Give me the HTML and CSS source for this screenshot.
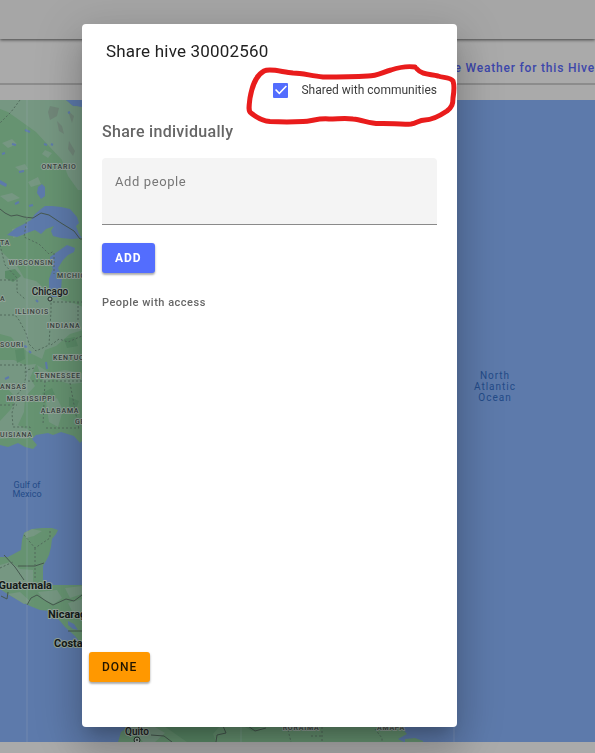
FILE: index.html
```html
<!DOCTYPE html>
<html lang="en">
<head>
<meta charset="utf-8">
<meta name="viewport" content="width=device-width, initial-scale=1">
<title>Share hive 30002560</title>
<link rel="stylesheet" href="styles.css">
</head>
<body>
<div class="page">
  <header class="topbar"></header>
  <nav class="toolbar"><a class="weather-link" href="#">See Weather for this Hive</a></nav>
  <main class="map">
    <svg class="map-canvas" viewBox="0 100 595 642" preserveAspectRatio="xMinYMin slice" role="img" aria-label="Map">
      <rect class="water" y="100" width="595" height="642"/>
      <path class="land" d="M0 100H66L73 106L82 107H120V441L82 441L80 443L74 436L61 432L53 435L48 433L36 435L32 439L37 445L33 449L25 447L18 443L8 447L0 445Z"/>
      <path class="plain" d="M20 100H66L73 106L90 107V190L78 190L68 176L62 160L48 145L36 132L22 122L8 112L0 109V100Z"/>
      <path class="plain" d="M0 250L8 258L16 264L24 278L36 281L46 290L62 300L76 304L90 310V328L70 334L56 346L45 350L42 359L28 352L18 345L11 337L0 334ZM0 360L14 360L25 365L36 364L30 378L35 386L25 397L24 412L18 425L31 431L26 439L12 438L0 439V421L11 409L16 398L8 389L0 384Z"/>
      <path class="plain" d="M37 365L50 373L65 370L90 375V382L70 384L53 379L44 383ZM46 402L57 398L63 410L58 427L49 422ZM2 143L12 139L17 144L8 148ZM15 167L25 164L28 169L20 171ZM28 182L38 177L41 184L31 187ZM0 196L12 193L20 198L8 202ZM12 229L22 227L26 234L13 238ZM45 150L52 153L48 158L42 154Z"/>
      <path class="forest" d="M5 271L15 269L21 276L13 282L5 278ZM15 350L24 348L25 359L17 363ZM42 393L52 388L55 395L46 400ZM69 397L79 401L76 409L69 406ZM64 339L75 337L78 346L67 348Z"/>
      <path class="scrub" d="M50 106L59 108L57 116L50 120L48 112ZM57 121L62 126L64 134L59 131ZM68 111L74 116L72 123ZM69 141L75 151L73 156L68 149Z"/>
      <path class="water" d="M66 100L72 105L82 107V100ZM7 235L16 228L22 225L31 220L35 214L41 209L45 206L52 206L61 207L70 209L77 217L79 223L76 226L79 234L82 238L72 239L61 238L53 236L51 231L54 226L46 229L41 234L35 230L27 233L17 237ZM50 263L50 257L57 252L67 245L75 248L74 252L68 255L63 260L58 268L62 277L61 290L59 297L52 297L49 291L49 279L53 268ZM38 187L42 184L45 187V196L41 199L37 193ZM0 180L7 184L6 187L0 184Z"/>
      <path class="speck" d="M25 130l5 2M12 144l4 1M44 144l3 1M2 154l3-1M51 144l2 1M19 172l5-1M15 204l4-2M68 113l2-1M29 206l4-1M29 351l2 2M24 346l3 1M46 362l1 7M5 379l4-2M36 300l2 2"/>
      <path class="border-line" d="M0 209L5 213L11 216L17 215L24 217L33 218L41 213L49 215L61 223L74 231L80 239H84"/>
      <path class="state-line" d="M20 100L11 112L0 123M27 218L24 237L39 244L49 254L54 251M0 245L5 265L17 278L17 292L25 299M0 280H16M0 315H15L19 320L26 333L29 344L36 351L49 345L51 311V300M53 302H82M51 345L59 339L68 342L82 336M34 368L27 370L24 386L16 396L12 413L13 427H30V431M0 405H17M0 365H26L25 374M28 381H82M45 381L43 425M46 428H79M70 383L75 410L79 429M78 302V320M54 253V274"/>
      <path class="land" d="M24 533L32 529L42 528L52 528L58 530L56 534L52 539L51 547L49 555L46 561L43 566V579L43 585L55 585L82 585H120V665H96L79 641L75 636L65 627L60 621L50 611L40 610L30 606L18 600L9 595L0 589V557L8 557L21 550L22 540Z"/>
      <path class="plain" d="M24 533L32 529L42 531L34 536L26 538ZM0 565L10 562L20 569L33 570V587L20 583L9 589L0 585ZM8 594L20 592L31 602L24 604ZM38 592L57 590L62 598L54 604L44 600ZM65 588L82 586V594L70 598ZM68 603L82 599V620L73 613Z"/>
      <path class="water" d="M68 621L74 624L78 630L73 629L68 625Z"/>
      <path class="border-line" d="M18 566H35M35 566L44 563M4 555L15 567L24 580M8 592L7 599L1 596M27 605L31 598L37 595L46 601L53 605L66 599L74 601L82 595M68 631H82"/>
      <path class="state-line" d="M24 535L35 548L50 538L50 531M35 548V580M0 568L13 562"/>
      <path class="land" d="M118 742L121 732L129 726H400L407 734L398 739L404 742Z"/>
      <path class="forest" d="M164 726H220L213 734L216 742H187L174 733ZM243 726L252 731L264 726Z"/>
      <path class="plain" d="M129 727H155L165 733L155 742H143L137 735Z"/>
      <path class="land" d="M405 739L415 738L423 741V742H405Z"/>
      <path class="border-line" d="M151 735L164 736L172 742M223 726L226 733L217 735L216 742M248 726L255 731L266 728"/>
      <path class="state-line" d="M288 730L291 742M322 727V742M375 729L382 738V742M311 736H322"/>
      <path class="tile-line" d="M27 100V742M241 726V742M454 726V742"/>
      <g class="label-state">
        <text x="59" y="169">ONTARIO</text>
        <text x="0" y="245" class="from-left">TA</text>
        <text x="31" y="265">WISCONSIN</text>
        <text x="57" y="278" class="from-left">MICHIGAN</text>
        <text x="0" y="301" class="from-left">A</text>
        <text x="32" y="314">ILLINOIS</text>
        <text x="47" y="328" class="from-left">INDIANA</text>
        <text x="0" y="347" class="from-left">SOURI</text>
        <text x="53" y="360" class="from-left">KENTUCKY</text>
        <text x="35" y="378" class="from-left">TENNESSEE</text>
        <text x="0" y="389" class="from-left">ANSAS</text>
        <text x="31" y="401">MISSISSIPPI</text>
        <text x="60" y="413">ALABAMA</text>
        <text x="75" y="424" class="from-left">GEORGIA</text>
        <text x="0" y="437" class="from-left">UISIANA</text>
        <text x="301" y="730">RORAIMA</text>
        <text x="391" y="730">AMAPA</text>
      </g>
      <g class="label-city">
        <text x="50" y="295">Chicago</text>
        <text x="137" y="735">Quito</text>
      </g>
      <g class="label-country">
        <text x="52" y="589" text-anchor="end">Guatemala</text>
        <text x="48" y="618">Nicaragua</text>
        <text x="54" y="647">Costa Rica</text>
      </g>
      <circle class="city-dot" cx="50" cy="299" r="2"/>
      <circle class="city-dot" cx="137" cy="740" r="3"/>
      <circle class="city-core" cx="137" cy="740" r="1"/>
      <g class="label-water">
        <text x="27" y="488">Gulf of</text><text x="27" y="497">Mexico</text>
      </g>
      <g class="label-water label-ocean">
        <text x="495" y="379">North</text><text x="495" y="390">Atlantic</text><text x="495" y="401">Ocean</text>
      </g>
    </svg>
  </main>
  <footer class="bottom"></footer>
</div>

<div class="overlay">
  <section class="dialog" role="dialog" aria-labelledby="dialog-title">
    <h1 class="dialog-title" id="dialog-title">Share hive 30002560</h1>
    <label class="shared"><input class="checkbox" type="checkbox" checked><span>Shared with communities</span></label>
    <h2 class="subtitle">Share individually</h2>
    <input class="people-input" type="text" placeholder="Add people" aria-label="Add people">
    <button class="button add" type="button">ADD</button>
    <h3 class="access">People with access</h3>
    <button class="button done" type="button">DONE</button>
    <svg class="marker" viewBox="244 62 216 66" aria-hidden="true">
      <path d="M415 67C408 66 400 67 391 70C383 72 377 76 368 76C351 77 337 77 323 77C311 76 303 73 293 73C282 72 270 68 264 71C255 76 252 87 250 98C249 106 248 111 251 113C256 117 263 121 270 121.500C281 122 293 122 303 121.500C312 121 319 118 329 119C338 119 345 118 353 119C363 120 371 124 380 123.500C390 123 402 125 411 124C417 123 419 120 425 120C432 120 441 115 447 111C452 107 453 104 453 98C454 92 454 84 453 81C450 77 444 78 438 76C430 74 422 75 417 69"/>
    </svg>
  </section>
</div>
</body>
</html>
```
FILE: styles.css
```css
* {
  box-sizing: border-box;
}

body {
  margin: 0;
  font-family: Roboto, "Liberation Sans", sans-serif;
  background: #aaa;
}

.page {
  display: flex;
  flex-direction: column;
  height: 100vh;
  overflow: hidden;
}

.topbar {
  flex: 0 0 39px;
  background: #a6a6a6;
  box-shadow: 0 1px 3px rgba(0, 0, 0, 0.6);
  z-index: 1;
}

.toolbar {
  flex: 0 0 61px;
  display: flex;
  justify-content: flex-end;
  align-items: flex-start;
  padding-top: 21px;
  background: linear-gradient(#8c8c8c, #8c8c8c) 0 44px / 100% 2px no-repeat #aaa;
}

.weather-link {
  font-size: 12px;
  line-height: 16px;
  font-weight: 500;
  letter-spacing: 0.8px;
  color: #3c47ab;
  text-decoration: none;
  white-space: nowrap;
}

.map {
  flex: 1;
  min-height: 0;
  background: #5d7aab;
}

.map-canvas {
  display: block;
  width: 100%;
  height: 100%;
}

.bottom {
  flex: 0 0 11px;
  background: #aaa;
}

.water { fill: #5d7aab; }
.land { fill: #669371; }
.plain { fill: #769782; }
.forest { fill: #5b8b68; }
.scrub { fill: #718779; }

.speck,
.border-line,
.state-line,
.tile-line {
  fill: none;
}

.speck { stroke: #5d7aab; stroke-width: 2; }
.border-line { stroke: #46584f; stroke-width: 1; }
.state-line { stroke: #526b5c; stroke-width: 1; stroke-dasharray: 2 2; }
.tile-line { stroke: #a0b0b8; stroke-width: 1; opacity: 0.3; }

.label-state,
.label-city,
.label-country {
  stroke: #93a59a;
  stroke-width: 2;
  stroke-linejoin: round;
  paint-order: stroke;
}

.label-state {
  font-size: 7px;
  font-weight: 500;
  letter-spacing: 0.8px;
  text-anchor: middle;
  fill: #39423e;
}

.label-state .from-left { text-anchor: start; }

.label-city {
  font-size: 10px;
  font-weight: 500;
  text-anchor: middle;
  fill: #1c211f;
}

.label-country {
  font-size: 11px;
  font-weight: 700;
  fill: #151a18;
}

.label-water {
  font-size: 9px;
  text-anchor: middle;
  fill: #234b88;
}

.label-ocean {
  font-size: 10px;
  letter-spacing: 1px;
}

.city-dot { fill: #99a79f; stroke: #27302c; stroke-width: 1; }
.city-core { fill: #27302c; }

.overlay {
  position: fixed;
  inset: 0;
  z-index: 2;
  display: flex;
  padding: 24px 138px 26px 82px;
}

.dialog {
  position: relative;
  flex: 1;
  min-width: 0;
  display: flex;
  flex-direction: column;
  align-items: flex-start;
  padding: 15px 20px 45px;
  border-radius: 4px;
  background: #fff;
  box-shadow: 0 11px 15px -7px rgba(0, 0, 0, 0.2), 0 24px 38px 3px rgba(0, 0, 0, 0.14), 0 9px 46px 8px rgba(0, 0, 0, 0.12);
}

.dialog-title {
  margin: 0 0 18px 4px;
  font-size: 17px;
  line-height: 24px;
  font-weight: 400;
  letter-spacing: 0.2px;
  color: #212121;
}

.shared {
  display: flex;
  align-items: center;
  gap: 13px;
  align-self: flex-end;
  font-size: 12px;
  line-height: 18px;
  color: #3c3c3c;
}

.checkbox {
  appearance: none;
  width: 15px;
  height: 15px;
  margin: 0;
  border-radius: 1px;
  background: #536dfe;
  display: grid;
  place-items: center;
}

.checkbox:checked::before {
  content: "";
  width: 12px;
  height: 10px;
  background: #fff;
  clip-path: polygon(0 50%, 10% 40%, 36% 72%, 90% 4%, 100% 14%, 36% 96%);
}

.subtitle {
  margin: 21px 0 14px;
  font-size: 16px;
  line-height: 24px;
  font-weight: 500;
  letter-spacing: 0.3px;
  color: #666;
}

.people-input {
  width: 100%;
  height: 67px;
  padding: 0 13px 20px;
  border: 0;
  border-bottom: 1px solid #8a8a8a;
  border-radius: 4px 4px 0 0;
  background: #f4f4f4;
  font: 400 13px/18px Roboto, "Liberation Sans", sans-serif;
  letter-spacing: 0.6px;
}

.people-input::placeholder { color: #777; }

.button {
  height: 30px;
  padding: 0 13px;
  border: 0;
  border-radius: 3px;
  font: 500 12px/30px Roboto, "Liberation Sans", sans-serif;
  letter-spacing: 1px;
  box-shadow: 0 2px 2px rgba(0, 0, 0, 0.25), 0 1px 3px rgba(0, 0, 0, 0.15);
}

.add {
  margin-top: 18px;
  background: #536dfe;
  color: #fff;
  font-weight: 700;
}

.access {
  margin: 22px 0 0;
  font-size: 11px;
  line-height: 16px;
  font-weight: 500;
  letter-spacing: 0.5px;
  color: #666;
}

.done {
  margin-top: auto;
  margin-left: -13px;
  background: #ff9800;
  color: #211500;
}

.marker {
  position: absolute;
  top: 38px;
  right: -3px;
  width: 216px;
  height: 66px;
  pointer-events: none;
}

.marker path {
  fill: none;
  stroke: #e91c1c;
  stroke-width: 5;
  stroke-linecap: round;
  stroke-linejoin: round;
}
```
